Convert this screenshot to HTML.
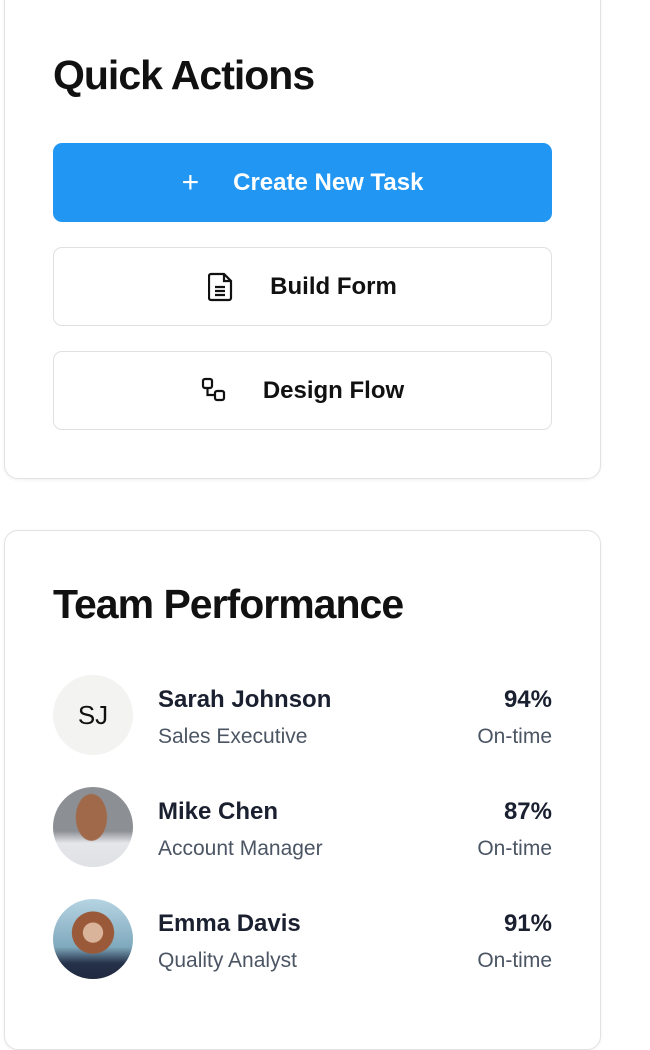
<!DOCTYPE html>
<html><head><style>
*{box-sizing:border-box;margin:0;padding:0}
body{width:650px;height:1026px;background:#fff;font-family:"Liberation Sans",sans-serif;position:relative;overflow:hidden}
.card{position:absolute;left:4px;width:597px;border:1.5px solid #e2e2e2;border-radius:14px;background:#fff;box-shadow:0 1px 3px rgba(0,0,0,.06)}
h2{position:absolute;left:48px;font-size:41px;font-weight:bold;color:#111;letter-spacing:-1px}
.btn{position:absolute;left:48px;width:499px;height:79px;border-radius:9px;display:flex;align-items:center;justify-content:center;font-size:24px;font-weight:bold;color:#111}
.btn.o{border:1.5px solid #e0e0e0}
.row{position:absolute;left:48px;width:499px;height:80px}
.av{position:absolute;left:0;top:0;width:80px;height:80px;border-radius:50%}
.nm{position:absolute;left:105px;top:11px;font-size:24px;font-weight:bold;color:#1a2030}
.sb{position:absolute;left:105px;top:50px;font-size:21px;color:#4b5563}
.pc{position:absolute;right:0;top:11px;font-size:24px;font-weight:bold;color:#1a2030}
.ot{position:absolute;right:0;top:50px;font-size:21px;color:#4b5563}
</style></head><body>
<div class="card" style="top:-12px;height:491px">
<h2 style="top:63px">Quick Actions</h2>
<div class="btn" style="top:154px;background:#2196f3;color:#fff"><span style="font-size:30px;font-weight:300;margin-right:34px">+</span>Create New Task</div>
<div class="btn o" style="top:258px"><svg width="26" height="30" viewBox="0 0 26 30" style="margin-right:36px" fill="none" stroke="#111" stroke-width="2.2"><path d="M3 2h13l7 7v17a2 2 0 0 1-2 2H3a2 2 0 0 1-2-2V4a2 2 0 0 1 2-2z M16 2v7h7 M7 15h10 M7 19h10 M7 23h10"/></svg>Build Form</div>
<div class="btn o" style="top:362px"><svg width="28" height="28" viewBox="0 0 28 28" style="margin-right:34px" fill="none" stroke="#111" stroke-width="2.2"><rect x="2" y="2" width="9" height="9" rx="2"/><rect x="14" y="14" width="9" height="9" rx="2"/><path d="M6.5 11v7h7.5"/></svg>Design Flow</div>
</div>
<div class="card" style="top:530px;height:520px">
<h2 style="top:50px">Team Performance</h2>
<div class="row" style="top:144px"><div class="av" style="background:#f3f3f2;display:flex;align-items:center;justify-content:center;font-size:26px;color:#111">SJ</div><div class="nm">Sarah Johnson</div><div class="sb">Sales Executive</div><div class="pc">94%</div><div class="ot">On-time</div></div>
<div class="row" style="top:256px"><div class="av" style="background:radial-gradient(ellipse 20% 30% at 48% 38%,#a06a4a 0 95%,transparent 100%),linear-gradient(180deg,#8c8f94 0%,#8c8f94 55%,#e4e6ea 70%,#dfe1e5 100%)"></div><div class="nm">Mike Chen</div><div class="sb">Account Manager</div><div class="pc">87%</div><div class="ot">On-time</div></div>
<div class="row" style="top:368px"><div class="av" style="background:radial-gradient(circle at 50% 42%,#d9b49a 0 16%,#9a5a3a 17% 34%,transparent 35%),linear-gradient(180deg,#b6d4e2 0%,#7fa9bd 60%,#26324a 80%,#1f2a40 100%)"></div><div class="nm">Emma Davis</div><div class="sb">Quality Analyst</div><div class="pc">91%</div><div class="ot">On-time</div></div>
</div>
</body></html>
